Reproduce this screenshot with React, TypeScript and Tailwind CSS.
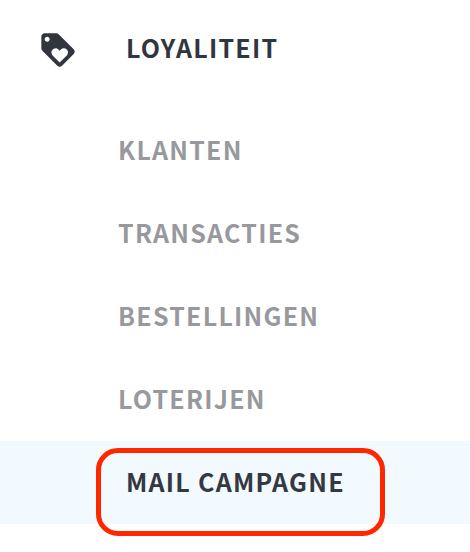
import { MdLoyalty } from "react-icons/md";

const items = [
  { label: "Klanten", href: "#klanten" },
  { label: "Transacties", href: "#transacties" },
  { label: "Bestellingen", href: "#bestellingen" },
  { label: "Loterijen", href: "#loterijen" },
];

export default function App() {
  return (
    <nav
      aria-label="Loyaliteit"
      className="min-h-screen bg-white pb-7 font-['Noto_Sans_CJK_SC',sans-serif] text-[25px] leading-8 font-bold tracking-wider uppercase"
    >
      <a
        href="#loyaliteit"
        className="flex h-[109px] items-start pt-[30px] pl-[38px] text-[#30353e]"
      >
        <MdLoyalty className="size-10 shrink-0" aria-hidden="true" />
        <span className="ml-12 pt-px">Loyaliteit</span>
      </a>

      <ul>
        {items.map((item) => (
          <li key={item.href}>
            <a
              href={item.href}
              className="flex h-[83px] items-center pb-1 pl-[118px] text-[#98999d]"
            >
              {item.label}
            </a>
          </li>
        ))}
        <li className="relative">
          <a
            href="#mail-campagne"
            aria-current="page"
            className="flex h-[83px] items-center bg-[#f2f9ff] pb-1 pl-[126px] text-[#343842]"
          >
            Mail campagne
          </a>
          <div className="pointer-events-none absolute top-[7px] left-24 h-[88px] w-[289px] rounded-[22px] border-5 border-[#ff2600]" />
        </li>
      </ul>
    </nav>
  );
}
